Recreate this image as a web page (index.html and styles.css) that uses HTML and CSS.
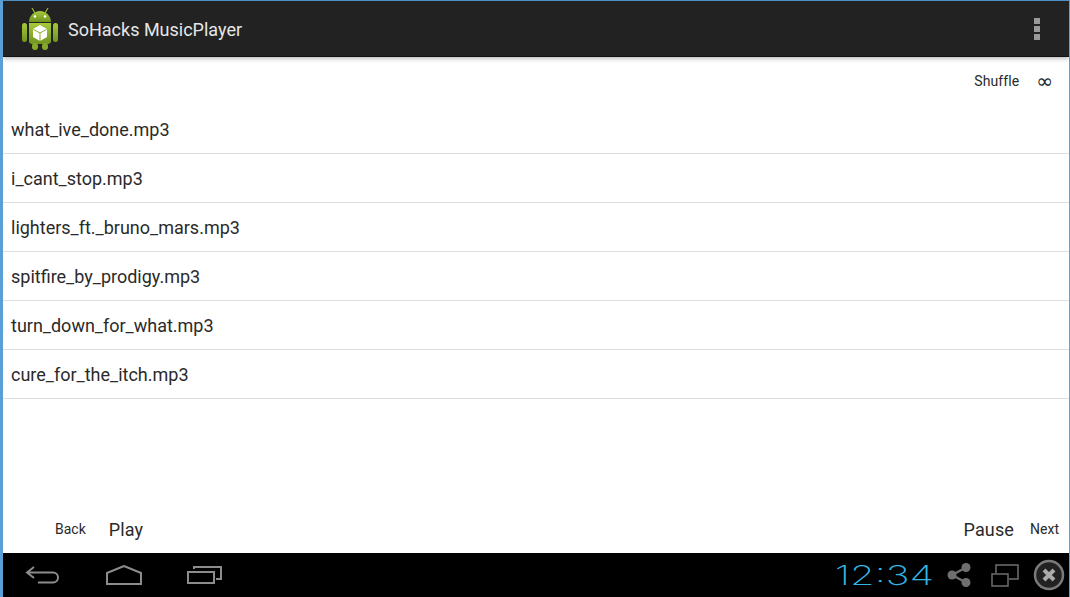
FILE: index.html
```html
<!DOCTYPE html>
<html lang="en">
<head>
    <meta charset="UTF-8">
    <title>SoHacks MusicPlayer</title>
    <link rel="stylesheet" href="styles.css">
</head>
<body>
    <div class="screen">
        <header class="action-bar">
            <svg class="app-icon" width="36" height="43" viewBox="0 0 36 43">
                <defs>
                    <linearGradient id="droid" x1="0" y1="0" x2="0" y2="1">
                        <stop offset="0" stop-color="#a9c83a"/>
                        <stop offset="1" stop-color="#6f9420"/>
                    </linearGradient>
                </defs>
                <path d="M10 1l3 5M26 1l-3 5" stroke="#9dbb35" stroke-width="1.200"/>
                <path d="M7 15c0-6 5-11 11-11s11 5 11 11z" fill="url(#droid)"/>
                <circle cx="13" cy="9.500" r="1.200" fill="#fff"/>
                <circle cx="23" cy="9.500" r="1.200" fill="#fff"/>
                <path d="M7 16h22v18a3 3 0 0 1-3 3H10a3 3 0 0 1-3-3z" fill="url(#droid)"/>
                <rect x="0" y="16" width="5" height="19" rx="2.500" fill="url(#droid)"/>
                <rect x="31" y="16" width="5" height="19" rx="2.500" fill="url(#droid)"/>
                <rect x="10" y="36" width="6" height="7" rx="3" fill="#86a82a"/>
                <rect x="20" y="36" width="6" height="7" rx="3" fill="#86a82a"/>
                <path d="M18 18l7 4v8l-7 4-7-4v-8z" fill="#fff"/>
                <path d="M11.500 22.500l6.500 3.500 6.500-3.500M18 26v8" stroke="#8aa92c" stroke-width="1" fill="none"/>
            </svg>
            <span class="app-title">SoHacks MusicPlayer</span>
            <div class="overflow">
                <i></i><i></i><i></i>
            </div>
        </header>

        <div class="toolbar">
            <span class="small shuffle">Shuffle</span>
            <span class="loop">∞</span>
        </div>

        <ul class="songs">
            <li>what_ive_done.mp3</li>
            <li>i_cant_stop.mp3</li>
            <li>lighters_ft._bruno_mars.mp3</li>
            <li>spitfire_by_prodigy.mp3</li>
            <li>turn_down_for_what.mp3</li>
            <li>cure_for_the_itch.mp3</li>
        </ul>

        <div class="controls">
            <div class="group left">
                <span class="small">Back</span>
                <span class="large">Play</span>
            </div>
            <div class="group right">
                <span class="large">Pause</span>
                <span class="small">Next</span>
            </div>
        </div>

        <footer class="nav-bar">
            <svg class="nav-icon" width="36" height="20" viewBox="0 0 36 20" fill="none" stroke="#8c8c8c" stroke-width="2">
                <path d="M9 2L2 7.500 9 13M2 7.500h26a5 5 0 0 1 0 10H13"/>
            </svg>
            <svg class="nav-icon" width="38" height="20" viewBox="0 0 38 20" fill="none" stroke="#8c8c8c" stroke-width="2">
                <path d="M2 8L19 1l17 7v11H2z"/>
            </svg>
            <svg class="nav-icon" width="35" height="20" viewBox="0 0 35 20" fill="none" stroke="#8c8c8c" stroke-width="2">
                <rect x="1" y="7" width="26" height="11"/>
                <path d="M7 4V2h27v12h-5"/>
            </svg>
            <span class="clock">12:34</span>
            <svg class="share" width="24" height="24" viewBox="0 0 24 24" fill="#6f6f6f">
                <circle cx="19" cy="4.500" r="4.500"/>
                <circle cx="19" cy="19.500" r="4.500"/>
                <circle cx="5" cy="12" r="4.500"/>
                <path d="M5 12l14-7.500M5 12l14 7.500" stroke="#6f6f6f" stroke-width="2.500"/>
            </svg>
            <svg class="windows" width="28" height="23" viewBox="0 0 28 23" fill="none" stroke="#6f6f6f" stroke-width="1.500">
                <path d="M5 9V1h22v14h-9"/>
                <rect x="1" y="10" width="16" height="12"/>
            </svg>
            <svg class="close" width="32" height="32" viewBox="0 0 32 32">
                <circle cx="16" cy="16" r="14" fill="#222" stroke="#7a7a7a" stroke-width="2.500"/>
                <path d="M11 11l10 10M21 11L11 21" stroke="#aaa" stroke-width="4"/>
            </svg>
        </footer>
    </div>
</body>
</html>
```

FILE: styles.css
```css
html, body {
    margin: 0;
    padding: 0;
}
body {
    font-family: Roboto, sans-serif;
    color: #2a2a2a;
    background: #fff;
}
.screen {
    display: flex;
    flex-direction: column;
    box-sizing: border-box;
    width: 1070px;
    height: 597px;
    overflow: hidden;
    border-top: 1px solid #4f8fc4;
    border-left: 3px solid #5b9fd8;
    border-right: 1px solid #5b9fd8;
}
.action-bar {
    display: flex;
    align-items: center;
    flex: none;
    height: 55px;
    padding: 0 29px 0 19px;
    background: #222;
    border-bottom: 1px solid #111;
    box-shadow: 0 2px 4px rgba(0, 0, 0, 0.25);
}
.app-icon {
    margin-right: 10px;
}
.app-title {
    padding-top: 2px;
    color: #e6e6e6;
    font-size: 18px;
}
.overflow {
    display: flex;
    flex-direction: column;
    gap: 2px;
    margin-left: auto;
}
.overflow i {
    display: block;
    width: 6px;
    height: 6px;
    background: #999;
}
.toolbar {
    display: flex;
    align-items: center;
    justify-content: flex-end;
    flex: none;
    gap: 17px;
    height: 48px;
    padding-right: 16px;
}
.small {
    font-size: 14px;
}
.shuffle {
    letter-spacing: 0.1px;
}
.loop {
    font-family: "DejaVu Sans", sans-serif;
    font-size: 20px;
}
.large {
    font-size: 18px;
    letter-spacing: 0.15px;
}
.songs {
    flex: none;
    margin: 0;
    padding: 0;
    list-style: none;
}
.songs li {
    box-sizing: border-box;
    height: 49px;
    padding: 1px 0 0 8px;
    line-height: 48px;
    font-size: 18px;
    border-bottom: 1px solid #ddd;
}
.controls {
    display: flex;
    align-items: center;
    justify-content: space-between;
    flex: none;
    height: 48px;
    margin-top: auto;
    padding: 0 10px 0 52px;
}
.group {
    display: flex;
    align-items: center;
}
.left {
    gap: 23px;
}
.right {
    gap: 16px;
}
.nav-bar {
    display: flex;
    align-items: center;
    flex: none;
    height: 44px;
    padding-left: 22px;
    background: #000;
}
.nav-icon {
    margin-right: 44px;
}
.clock {
    margin-left: auto;
    color: #33b5e5;
    font-family: Inter, sans-serif;
    font-size: 27px;
    font-weight: 200;
    transform: scaleX(1.48);
    transform-origin: right center;
}
.share {
    margin-left: 13px;
}
.windows {
    margin-left: 20px;
}
.close {
    margin: 0 4px 0 14px;
}
```
